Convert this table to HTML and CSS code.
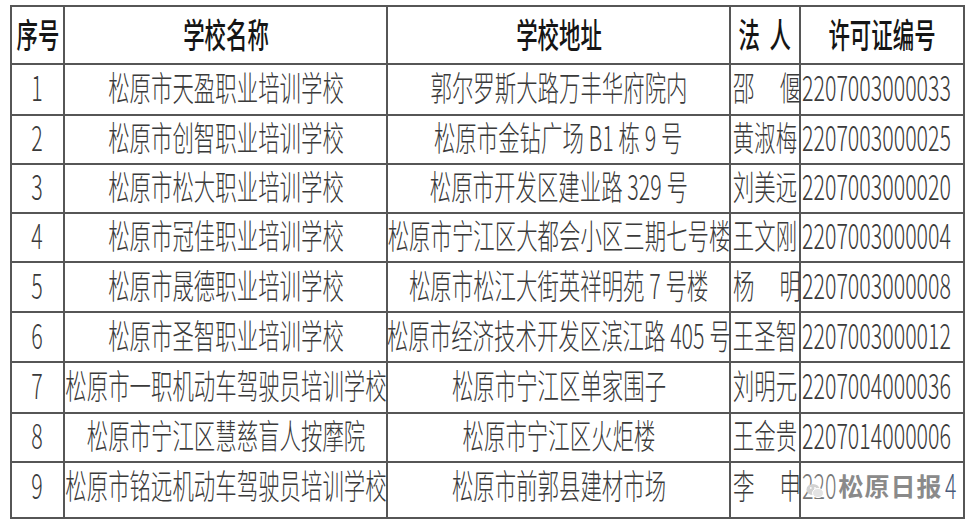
FILE: index.html
```html
<!DOCTYPE html>
<html lang="zh-CN">
<head>
<meta charset="utf-8">
<title>松原市职业培训学校名单</title>
<link rel="stylesheet" href="styles.css">
</head>
<body>
<div class="table">
  <div class="c h"><span class="t">序号</span></div>
  <div class="c h"><span class="t">学校名称</span></div>
  <div class="c h"><span class="t">学校地址</span></div>
  <div class="c h"><span class="t">法&nbsp;&nbsp;人</span></div>
  <div class="c h"><span class="t">许可证编号</span></div>

  <div class="c"><span class="t">1</span></div>
  <div class="c"><span class="t">松原市天盈职业培训学校</span></div>
  <div class="c"><span class="t">郭尔罗斯大路万丰华府院内</span></div>
  <div class="c n2"><span class="t l">邵</span><span class="t r">偃</span></div>
  <div class="c num"><span class="t l">2207003000033</span></div>

  <div class="c"><span class="t">2</span></div>
  <div class="c"><span class="t">松原市创智职业培训学校</span></div>
  <div class="c"><span class="t">松原市金钻广场 B1 栋 9 号</span></div>
  <div class="c"><span class="t">黄淑梅</span></div>
  <div class="c num"><span class="t l">2207003000025</span></div>

  <div class="c"><span class="t">3</span></div>
  <div class="c"><span class="t">松原市松大职业培训学校</span></div>
  <div class="c"><span class="t">松原市开发区建业路 329 号</span></div>
  <div class="c"><span class="t">刘美远</span></div>
  <div class="c num"><span class="t l">2207003000020</span></div>

  <div class="c"><span class="t">4</span></div>
  <div class="c"><span class="t">松原市冠佳职业培训学校</span></div>
  <div class="c"><span class="t">松原市宁江区大都会小区三期七号楼</span></div>
  <div class="c"><span class="t">王文刚</span></div>
  <div class="c num"><span class="t l">2207003000004</span></div>

  <div class="c"><span class="t">5</span></div>
  <div class="c"><span class="t">松原市晟德职业培训学校</span></div>
  <div class="c"><span class="t">松原市松江大街英祥明苑 7 号楼</span></div>
  <div class="c n2"><span class="t l">杨</span><span class="t r">明</span></div>
  <div class="c num"><span class="t l">2207003000008</span></div>

  <div class="c"><span class="t">6</span></div>
  <div class="c"><span class="t">松原市圣智职业培训学校</span></div>
  <div class="c"><span class="t">松原市经济技术开发区滨江路 405 号</span></div>
  <div class="c"><span class="t">王圣智</span></div>
  <div class="c num"><span class="t l">2207003000012</span></div>

  <div class="c"><span class="t">7</span></div>
  <div class="c"><span class="t">松原市一职机动车驾驶员培训学校</span></div>
  <div class="c"><span class="t">松原市宁江区单家围子</span></div>
  <div class="c"><span class="t">刘明元</span></div>
  <div class="c num"><span class="t l">2207004000036</span></div>

  <div class="c"><span class="t">8</span></div>
  <div class="c"><span class="t">松原市宁江区慧慈盲人按摩院</span></div>
  <div class="c"><span class="t">松原市宁江区火炬楼</span></div>
  <div class="c"><span class="t">王金贵</span></div>
  <div class="c num"><span class="t l">2207014000006</span></div>

  <div class="c last"><span class="t">9</span></div>
  <div class="c last"><span class="t">松原市铭远机动车驾驶员培训学校</span></div>
  <div class="c last"><span class="t">松原市前郭县建材市场</span></div>
  <div class="c last n2"><span class="t l">李</span><span class="t r">申</span></div>
  <div class="c last num wm-cell">
    <span class="t l part-a">220</span>
    <span class="wm-text">松原日报</span>
    <span class="t l part-b">4</span>
    <svg class="wm-icon" width="18" height="16" viewBox="0 0 18 16">
      <ellipse cx="7" cy="6.5" rx="6.5" ry="5.5" fill="#d2d2d2"/>
      <ellipse cx="12" cy="10" rx="5.5" ry="4.6" fill="#e4e4e4" stroke="#fff" stroke-width="1"/>
      <circle cx="4.8" cy="5" r="0.9" fill="#fff"/>
      <circle cx="9" cy="5" r="0.9" fill="#fff"/>
    </svg>
  </div>
</div>
</body>
</html>
```

FILE: styles.css
```css
html, body {
  margin: 0;
  padding: 0;
  background: #ffffff;
}

body {
  font-family: "Noto Sans CJK SC", "Noto Sans", sans-serif;
  color: #3a3a3a;
}

.table {
  display: grid;
  grid-template-columns: 51px 321px 341px 68px 162px;
  grid-template-rows: 56px 49px 47px 47px 47px 48px 48px 49px 47px 54px;
  gap: 2px;
  padding: 2px;
  background: #565656;
  width: max-content;
  margin: 5px 0 0 10px;
}

.c {
  background: #ffffff;
  display: flex;
  align-items: center;
  justify-content: center;
  white-space: nowrap;
  font-size: 34px;
  font-weight: 300;
  line-height: 1;
  min-width: 0;
  padding-bottom: 5px;
}

.c.last {
  padding-bottom: 10px;
}

.t {
  display: inline-block;
  transform: scaleX(0.63);
  transform-origin: center;
  flex: none;
}

.t.l { transform-origin: left center; }
.t.r { transform-origin: right center; }

.h {
  font-weight: 500;
  color: #151515;
  padding-bottom: 2px;
}

.n2 {
  justify-content: space-between;
  padding-left: 2px;
}

.num {
  justify-content: flex-start;
  padding-left: 1px;
}

.wm-cell {
  position: relative;
}

.part-a {
  color: #777777;
  margin-right: -20px;
}

.part-b {
  color: #4a5a78;
  margin-left: 2px;
}

.wm-text {
  flex: none;
  font-size: 25px;
  font-weight: 700;
  letter-spacing: 1px;
  margin-left: 2px;
  color: #8a8a8a;
  text-shadow: 0 0 2px #fff, 1px 1px 0 #fff, -1px -1px 0 #fff;
}

.wm-icon {
  position: absolute;
  left: 5px;
  top: 20px;
  display: block;
}
```
